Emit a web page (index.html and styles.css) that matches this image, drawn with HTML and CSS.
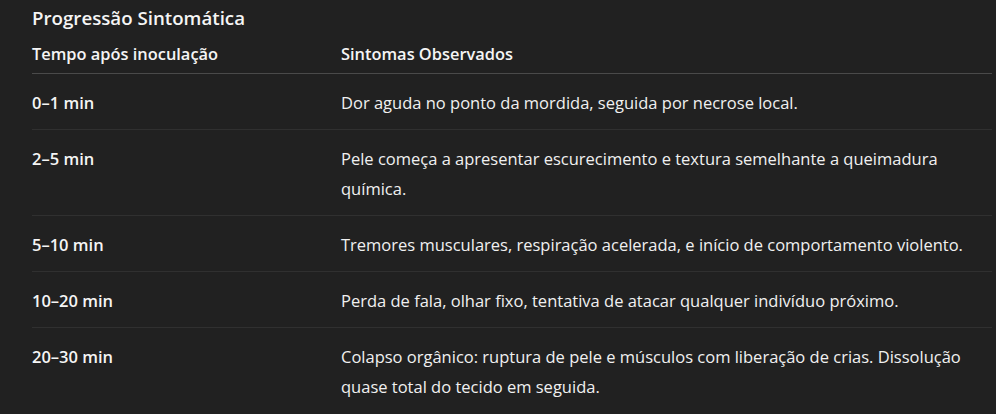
FILE: index.html
```html
<!DOCTYPE html>
<html lang="pt">
<head>
<meta charset="utf-8">
<link rel="stylesheet" href="styles.css">
</head>
<body>
<div class="doc">
  <h3 class="title">Progressão Sintomática</h3>
  <table class="tbl">
    <colgroup><col class="c1"><col class="c2"></colgroup>
    <thead>
      <tr><th>Tempo após inoculação</th><th>Sintomas Observados</th></tr>
    </thead>
    <tbody>
      <tr><td><strong>0–1 min</strong></td><td>Dor aguda no ponto da mordida, seguida por necrose local.</td></tr>
      <tr><td><strong>2–5 min</strong></td><td>Pele começa a apresentar escurecimento e textura semelhante a queimadura química.</td></tr>
      <tr><td><strong>5–10 min</strong></td><td>Tremores musculares, respiração acelerada, e início de comportamento violento.</td></tr>
      <tr><td><strong>10–20 min</strong></td><td>Perda de fala, olhar fixo, tentativa de atacar qualquer indivíduo próximo.</td></tr>
      <tr><td><strong>20–30 min</strong></td><td>Colapso orgânico: ruptura de pele e músculos com liberação de crias. Dissolução quase total do tecido em seguida.</td></tr>
    </tbody>
  </table>
</div>
</body>
</html>
```
FILE: styles.css
```css
html, body {
  margin: 0;
  background: #212121;
}
body {
  font-family: "Open Sans", "Noto Sans", sans-serif;
  color: #f0f0f0;
  font-size: 16.5px;
}
.doc {
  padding: 4px 0 0 32px;
}
.title {
  margin: 0;
  font-size: 18.7px;
  line-height: 28px;
  font-weight: 600;
  color: #f5f5f5;
}
.tbl {
  width: 960px;
  border-collapse: collapse;
  table-layout: fixed;
  margin-top: 4px;
}
.c1 { width: 300px; }
.tbl th {
  text-align: left;
  font-weight: 600;
  font-size: 16.4px;
  padding: 4px 9px 5px 9px;
  line-height: 28px;
  border-bottom: 1px solid #4a4a4a;
  color: #f5f5f5;
}
.tbl td {
  vertical-align: top;
  padding: 14px 9px 11px 9px;
  line-height: 30px;
  border-bottom: 1px solid #303030;
}
.tbl tbody tr:last-child td { border-bottom: none; }
.tbl th:first-child, .tbl td:first-child { padding-left: 0; }
.tbl strong { font-weight: 600; color: #f5f5f5; }
```
